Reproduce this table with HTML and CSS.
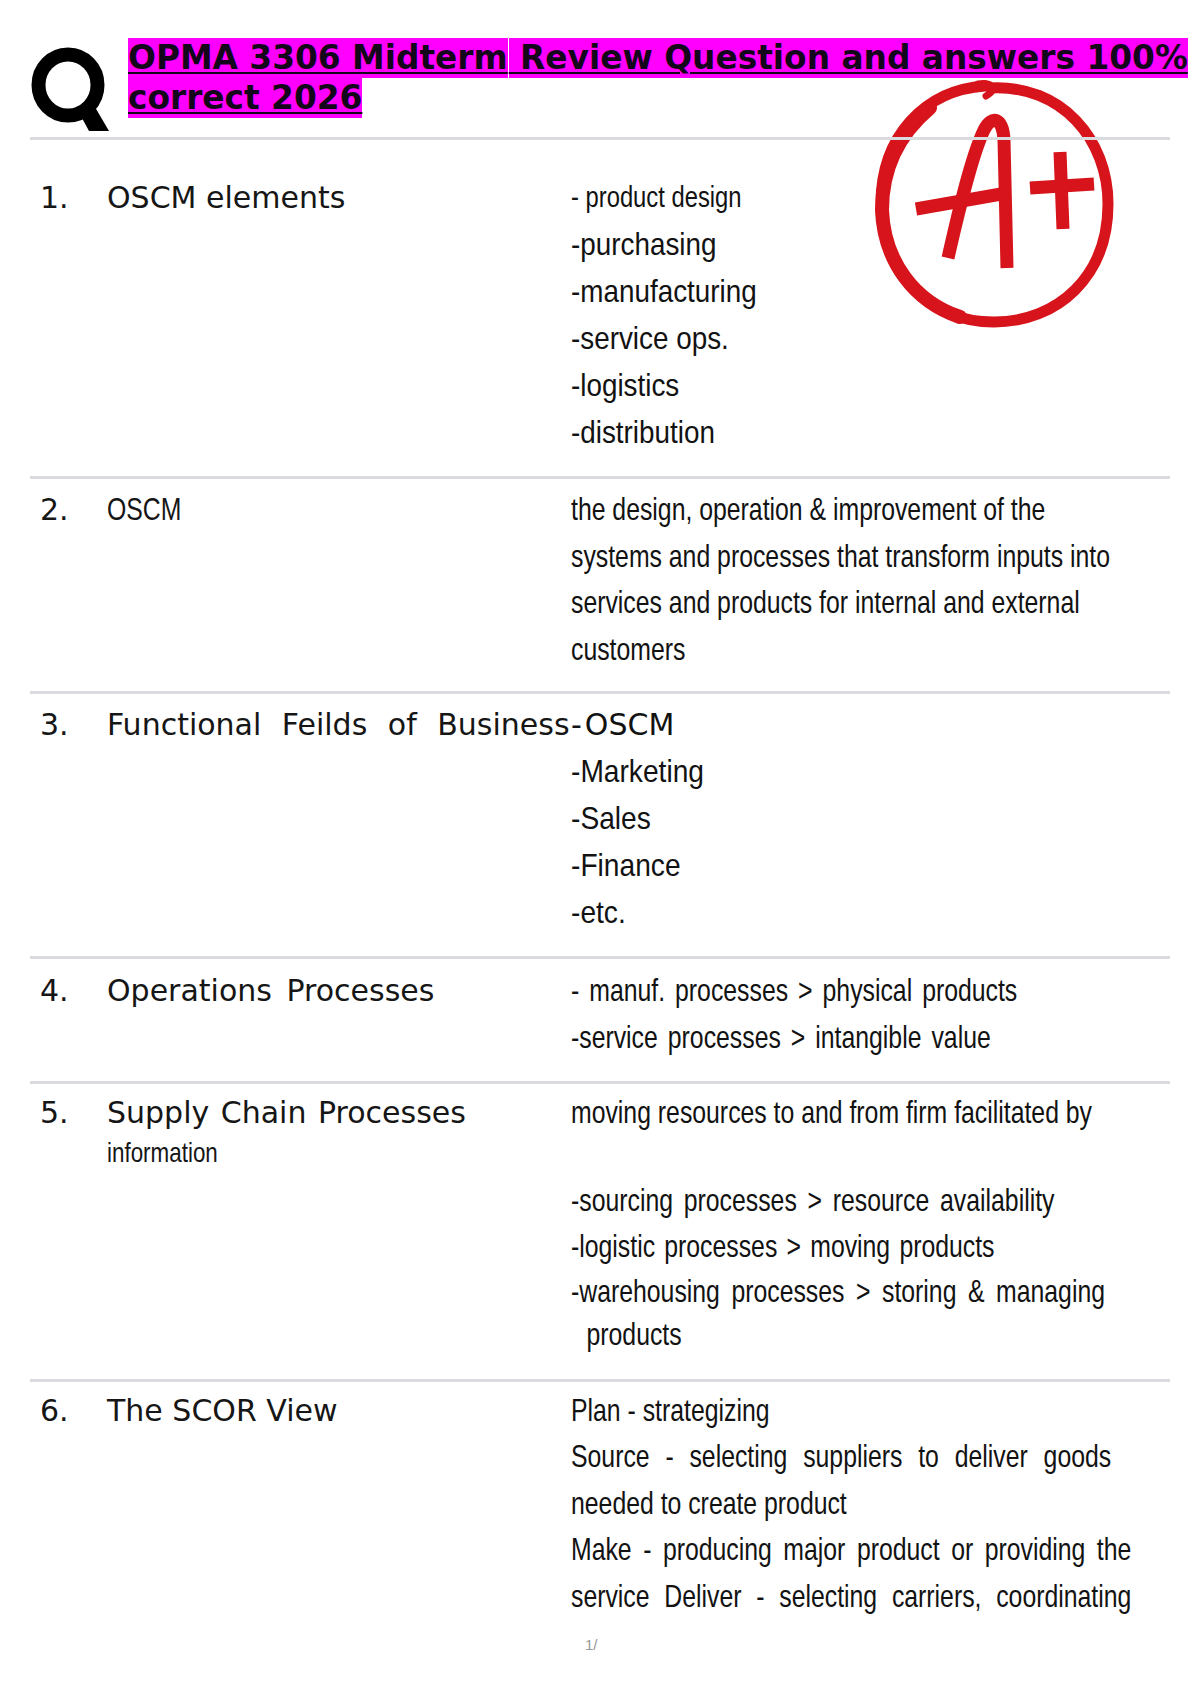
FILE: index.html
```html
<!DOCTYPE html>
<html lang="en">
<head>
<meta charset="utf-8">
<title>OPMA 3306 Midterm Review</title>
<link rel="stylesheet" href="styles.css">
</head>
<body>
<div class="page">
  <svg class="grade" viewBox="860 60 270 290" width="270" height="290" aria-hidden="true">
    <path class="ring" d="M 990 88 C 1062 84 1108 140 1108 204 C 1108 276 1058 322 994 322 C 928 322 881 272 881 204 C 881 136 925 90 985 86"/>
    <path class="ring thick" d="M 930 108 C 898 135 882 170 882 210 C 884 262 915 302 960 317"/>
    <path class="ring thin" d="M 978 84 C 990 82 1000 88 986 96"/>
    <path class="pen" d="M 948 258 C 960 205 972 155 984 130 C 992 114 1003 118 1004 140 L 1007 268"/>
    <path class="pen" d="M 916 209 L 1007 193"/>
    <path class="pen" d="M 1060 152 L 1063 229"/>
    <path class="pen" d="M 1030 188 L 1094 184"/>
  </svg>

  <header class="head">
    <svg class="qlogo" viewBox="0 0 78 86" width="78" height="86" aria-hidden="true">
      <ellipse cx="37" cy="38" rx="29.5" ry="30.5" fill="none" stroke="#000" stroke-width="14"/>
      <polygon points="45,60 61,55 78,84 58,84" fill="#000"/>
    </svg>
    <h1 class="title"><span class="hl">OPMA 3306 Midterm</span><span class="hl hl2"> Review Question and answers 100%</span> <span class="hl">correct 2026</span></h1>
  </header>

  <main class="qa">
    <section class="row r1">
      <div class="num">1.</div>
      <div class="label">OSCM elements</div>
      <div class="ans">
        <div class="ln sm">- product design</div>
        <div class="ln">-purchasing</div>
        <div class="ln">-manufacturing</div>
        <div class="ln">-service ops.</div>
        <div class="ln">-logistics</div>
        <div class="ln">-distribution</div>
      </div>
    </section>

    <section class="row r2">
      <div class="num">2.</div>
      <div class="label"><div class="ln lbl-narrow">OSCM</div></div>
      <div class="ans">
        <div class="ln">the design, operation &amp; improvement of the</div>
        <div class="ln">systems and processes that transform inputs into</div>
        <div class="ln">services and products for internal and external</div>
        <div class="ln">customers</div>
      </div>
    </section>

    <section class="row r3">
      <div class="num">3.</div>
      <div class="label spaced">Functional Feilds of Business</div>
      <div class="ans">
        <div class="reg">-<span class="oscm">OSCM</span></div>
        <div class="ln">-Marketing</div>
        <div class="ln">-Sales</div>
        <div class="ln">-Finance</div>
        <div class="ln">-etc.</div>
      </div>
    </section>

    <section class="row r4">
      <div class="num">4.</div>
      <div class="label spaced2">Operations Processes</div>
      <div class="ans">
        <div class="ln ws4">- manuf. processes &gt; physical products</div>
        <div class="ln ws4">-service processes &gt; intangible value</div>
      </div>
    </section>

    <section class="row r5">
      <div class="num">5.</div>
      <div class="label">
        <div class="spaced3">Supply Chain Processes</div>
        <div class="ln info">information</div>
      </div>
      <div class="ans">
        <div class="ln first">moving resources to and from firm facilitated by</div>
        <div class="gap"></div>
        <div class="ln ws5">-sourcing processes &gt; resource availability</div>
        <div class="ln ws3">-logistic processes &gt; moving products</div>
        <div class="ln ws6">-warehousing processes &gt; storing &amp; managing</div>
        <div class="ln cont">products</div>
      </div>
    </section>

    <section class="row r6">
      <div class="num">6.</div>
      <div class="label">The SCOR View</div>
      <div class="ans">
        <div class="ln">Plan - strategizing</div>
        <div class="ln just j1">Source - selecting suppliers to deliver goods</div>
        <div class="ln">needed to create product</div>
        <div class="ln just j2">Make - producing major product or providing the</div>
        <div class="ln just j2">service Deliver - selecting carriers, coordinating</div>
      </div>
    </section>
  </main>

  <div class="pageno">1/</div>
</div>
</body>
</html>
```

FILE: styles.css
```css
* { box-sizing: border-box; }

html, body { overflow-x: hidden; }

body {
  margin: 0;
  background: #ffffff;
  color: #161616;
  font-family: "DejaVu Sans", "Liberation Sans", sans-serif;
}

.page {
  position: relative;
  width: 1200px;
  min-height: 1700px;
  overflow: hidden;
}

/* A+ stamp, lies under the rules and the title */
.grade {
  position: absolute;
  left: 860px;
  top: 60px;
  z-index: 0;
}
.grade .ring {
  fill: none;
  stroke: #d7141b;
  stroke-width: 11;
  stroke-linecap: round;
}
.grade .ring.thick { stroke-width: 14; }
.grade .ring.thin { stroke-width: 7; }
.grade .pen {
  fill: none;
  stroke: #d7141b;
  stroke-width: 13;
  stroke-linecap: butt;
  stroke-linejoin: round;
}

/* header */
.head {
  position: relative;
  z-index: 2;
  display: flex;
  align-items: flex-start;
  gap: 19px;
  height: 137px;
  padding: 38px 0 0 31px;
}
.qlogo {
  flex: none;
  margin-top: 9px;
}
.title {
  margin: 0;
  width: 1070px;
  font-family: "DejaVu Sans", sans-serif;
  font-weight: bold;
  font-size: 32.8px;
  line-height: 40px;
  color: #14061a;
}
.hl {
  background: #ff00ff;
  padding: 1px 0;
  text-decoration: underline;
  text-decoration-thickness: 2px;
  text-underline-offset: 3px;
  -webkit-box-decoration-break: clone;
  box-decoration-break: clone;
}
.hl2 { border-left: 1.5px solid #ffffff; }

/* question rows */
.qa {
  position: relative;
  z-index: 1;
  margin: 0 30px;
  border-top: 3px solid #d9dbdf;
}
.row {
  --sx: 0.8;
  display: grid;
  grid-template-columns: 77px 464px 1fr;
  border-bottom: 3px solid #d9dbdf;
  font-size: 30px;
  line-height: 47px;
}
.row:last-child { border-bottom: none; }

.num { padding-left: 10px; }
.label { white-space: nowrap; }
.label.spaced { word-spacing: 11px; }
.spaced2 { word-spacing: 5px; }
.spaced3 { word-spacing: 2px; }

/* narrow answer text: Arial-metric face drawn condensed */
.ans {
  font-family: "Liberation Sans", Arial, sans-serif;
  font-size: 32px;
  line-height: 47px;
  white-space: nowrap;
  color: #121212;
  min-width: 0;
}
.ln {
  transform: scaleX(var(--sx));
  transform-origin: 0 50%;
  font-family: "Liberation Sans", Arial, sans-serif;
  white-space: nowrap;
}
.lbl-narrow { --sx: 0.8; font-size: 31px; }
.info {
  --sx: 0.8;
  font-size: 28px;
  line-height: 33px;
}

.r1 .ans { --sx: 0.87; }
.r1 .ans .sm { --sx: 0.82; font-size: 29px; }
.r2 .ans { --sx: 0.775; line-height: 46.5px; }
.r3 .ans { --sx: 0.88; }
.r4 .ans, .r5 .ans, .r6 .ans { --sx: 0.775; }

.ans .reg {
  font-family: "DejaVu Sans", sans-serif;
  font-size: 30px;
}
.ans .oscm { margin-left: 3px; }
.ws3 { word-spacing: 3px; }
.ws4 { word-spacing: 4px; }
.ws5 { word-spacing: 5px; }
.ws6 { word-spacing: 6px; }

.r1 { padding: 34px 0 20px; }
.r2 { padding: 7px 0 19px; }
.r3 { padding: 7px 0 20px; }
.r4 { padding: 8px 0 20px; }
.r5 { padding: 5px 0 25px; }
.r6 { padding: 5px 0 0; }

.r5 .ans { line-height: 45.5px; }
.r5 .ans .first { line-height: 47px; }
.r5 .gap { height: 42px; }
.r5 .cont { padding-left: 20px; line-height: 39px; }

.r6 .ans { line-height: 46.5px; }
.just {
  text-align: justify;
  text-align-last: justify;
}
.j1 { width: 697px; }
.j2 { width: 723px; }

.pageno {
  margin: 17px 0 0 585px;
  font-family: "Liberation Sans", sans-serif;
  font-size: 15px;
  color: #9a9a9a;
}
```
